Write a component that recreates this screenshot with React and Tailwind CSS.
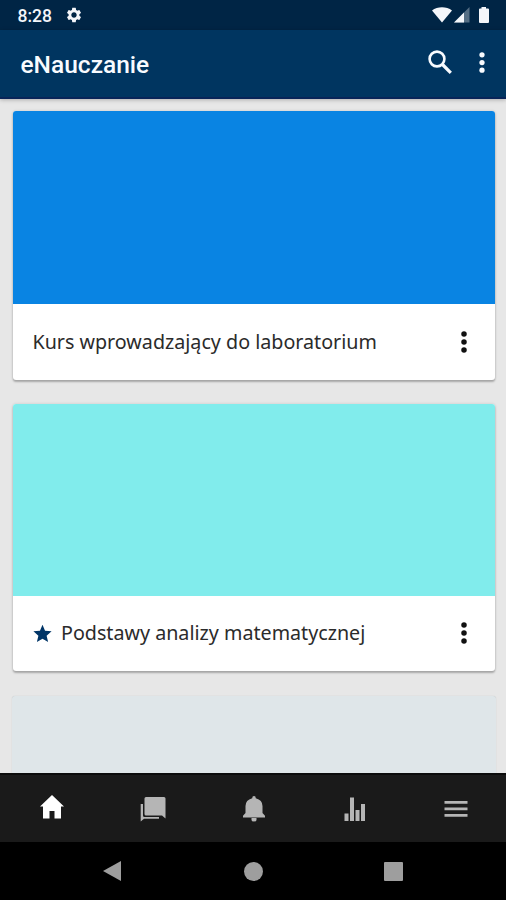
import React from 'react';
import { MdSettings } from 'react-icons/md';

const courses = [
  {
    id: 1,
    name: 'Kurs wprowadzający do laboratorium',
    cover: 'h-[193px] bg-[#0984e3]',
    body: 'h-[76px] pb-px',
    favourite: false,
  },
  {
    id: 2,
    name: 'Podstawy analizy matematycznej',
    cover: 'h-[192px] bg-[#81ecec]',
    body: 'h-[75px] pb-px',
    favourite: true,
  },
];

const MoreIcon = ({ className }) => (
  <svg viewBox="0 0 6 22" className={className} fill="currentColor">
    <circle cx="3" cy="3" r="2.75" />
    <circle cx="3" cy="11" r="2.75" />
    <circle cx="3" cy="19" r="2.75" />
  </svg>
);

const StatusBar = () => (
  <div className="flex h-[30px] shrink-0 items-center bg-[#002545] pl-[17.5px] pr-4 text-[#f4f6fa]">
    <span className="w-[34px] pt-[3px] font-[Roboto,sans-serif] text-[17.5px] font-medium leading-none whitespace-nowrap">
      8:28
    </span>
    <MdSettings className="ml-[13px] size-[18px]" />
    <svg viewBox="0 0 20 16" className="ml-auto h-4 w-5" fill="currentColor">
      <path d="M0 3.5C5.5-.8 14.5-.8 20 3.5L10 15.5Z" />
    </svg>
    <svg viewBox="0 0 16 16" className="ml-0.5 size-4" fill="currentColor">
      <path d="M15.5 0V15.5H0Z" opacity=".35" />
      <path d="M10 5.5V15.5H0Z" />
    </svg>
    <svg viewBox="0 0 12 18" className="ml-2 h-[18px] w-3" fill="currentColor">
      <path d="M3.5 1h4.5v1.500h2q1 0 1 1v12.500q0 1-1 1h-8q-1 0-1-1v-12.500q0-1 1-1h1.500z" />
    </svg>
  </div>
);

const Header = () => (
  <header className="relative z-10 flex h-[69px] shrink-0 items-center border-b-2 border-[#082458] bg-[#003560] pl-[20.5px] pr-[21px] text-[#f8fbff] shadow-[0_1px_4px_rgba(0,0,0,0.25)]">
    <h1 className="pt-[3px] font-[Roboto,sans-serif] text-[24.5px] font-medium leading-none">
      eNauczanie
    </h1>
    <svg
      viewBox="0 0 24 24"
      className="mb-[3px] ml-auto size-6"
      fill="none"
      stroke="currentColor"
    >
      <circle cx="9" cy="9" r="7.4" strokeWidth="2.6" />
      <path d="M14.5 14.5L22.8 22.8" strokeWidth="3.2" />
    </svg>
    <MoreIcon className="mb-0.5 ml-[27px] h-[21px] w-1.5" />
  </header>
);

const CourseCard = ({ course }) => (
  <article className="overflow-hidden rounded-[3px] bg-white shadow-[0_2px_2px_rgba(0,0,0,0.25),0_0_3px_rgba(0,0,0,0.14)]">
    <div className={course.cover} />
    <div
      className={`flex items-center pl-5 pr-7 text-[#2b2b2b] ${course.body}`}
    >
      {course.favourite && (
        <svg
          viewBox="0 0 24 24"
          className="mr-[9.5px] size-[19px] text-[#003567]"
          fill="currentColor"
        >
          <path d="M12 1l3.200 7.600 8.300.7-6.300 5.400 1.900 8.100L12 18.500l-7.100 4.300 1.900-8.100L.5 9.300l8.300-.7z" />
        </svg>
      )}
      <h2 className="font-['Noto_Sans',sans-serif] text-[19.7px] leading-7 whitespace-nowrap">
        {course.name}
      </h2>
      <MoreIcon className="ml-auto h-[22px] w-1.5 text-[#111]" />
    </div>
  </article>
);

const TabBar = () => (
  <nav className="relative z-10 grid h-[69px] shrink-0 grid-cols-5 place-items-center border-t-2 border-[#0c0c0c] bg-[#1a1a1a] pl-0.5 text-[#b5b5b5]">
    <svg
      viewBox="0 0 24 24"
      className="mb-1 size-6 text-white"
      fill="currentColor"
    >
      <path d="M12 0L24 11.5H21V23.5H14.5V16H9.5V23.5H3V11.5H0Z" />
    </svg>
    <svg viewBox="0 0 26 26" className="size-[26px]" fill="currentColor">
      <path d="M6 1h18q1.500 0 1.500 1.500V22.500l-3.500-3H6q-1.500 0-1.500-1.500V2.500Q4.500 1 6 1z" />
      <path d="M.7 8h2.300v11.500q0 1.500 1.500 1.500h14.500v1.700H4L.7 25.500z" />
    </svg>
    <svg viewBox="0 0 24 28" className="h-7 w-6" fill="currentColor">
      <path d="M12 1q1.800 0 1.800 2.200Q20.500 5 20.500 11v7l2.500 2.700v1.800H1v-1.800L3.500 18v-7q0-6 6.700-7.800Q10.200 1 12 1zM9.500 23h5v2q0 1.500-2.500 1.500T9.500 25z" />
    </svg>
    <svg viewBox="0 0 22 24" className="h-6 w-[22px]" fill="currentColor">
      <path d="M.5 16.500h4V24h-4zM6 .5h4V24H6zM11.500 13h4v11h-4zM17 7h4v17h-4z" />
    </svg>
    <svg viewBox="0 0 24 18" className="h-[18px] w-6" fill="currentColor">
      <path d="M.5 1h23v2.700H.5zM.5 7.500h23v2.700H.5zM.5 14h23v2.700H.5z" />
    </svg>
  </nav>
);

const SystemBar = () => (
  <div className="flex h-[58px] shrink-0 items-center justify-between bg-black pl-[102px] pr-[103px] text-[#9e9e9e]">
    <svg viewBox="0 0 20 22" className="h-[22px] w-5" fill="currentColor">
      <path d="M19 1v20L1 11z" />
    </svg>
    <div className="size-[19px] rounded-full bg-current" />
    <div className="size-[19px] rounded-[1px] bg-current" />
  </div>
);

const App = () => {
  return (
    <div className="flex h-[900px] w-[506px] flex-col overflow-hidden bg-[#e7e7e7]">
      <StatusBar />
      <Header />
      <main className="flex min-h-0 flex-1 flex-col overflow-hidden pl-3 pr-2.5 pt-3">
        <div className="flex shrink-0 flex-col gap-6 pl-[0.5px] pr-px">
          {courses.map((course) => (
            <CourseCard key={course.id} course={course} />
          ))}
        </div>
        <div className="mt-[25px] h-[193px] shrink-0 rounded-[3px] bg-[#dfe6e9] shadow-[0_0_1px_rgba(0,0,0,0.2)]" />
      </main>
      <TabBar />
      <SystemBar />
    </div>
  );
};

export default App;
